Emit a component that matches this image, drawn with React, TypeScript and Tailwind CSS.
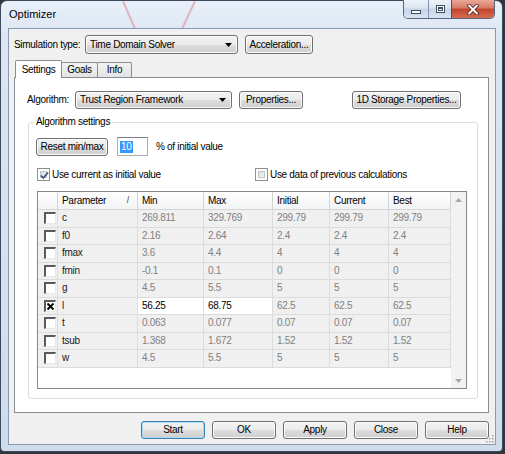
import React from "react";

const BTN_BG =
  "bg-[linear-gradient(180deg,#f2f2f2_0%,#ebebeb_50%,#dddddd_51%,#cfcfcf_100%)]";

function Btn({
  children,
  className = "",
  def = false,
}: {
  children: React.ReactNode;
  className?: string;
  def?: boolean;
}) {
  return (
    <div
      className={`flex items-center justify-center rounded-[3px] border ${
        def
          ? "border-[#3c7fb1] shadow-[inset_0_0_0_1px_#a9dcf7]"
          : "border-[#707070] shadow-[inset_0_0_0_1px_#fbfbfb]"
      } ${BTN_BG} text-[10px] leading-none tracking-[-0.3px] ${className}`}
    >
      {children}
    </div>
  );
}

function Combo({ text, className = "" }: { text: string; className?: string }) {
  return (
    <div
      className={`flex items-center rounded-[3px] border border-[#707070] shadow-[inset_0_0_0_1px_#fbfbfb] ${BTN_BG} pl-[4px] pr-[5px] text-[10px] leading-none tracking-[-0.3px] ${className}`}
    >
      <span className="flex-1">{text}</span>
      <svg width="7" height="4" viewBox="0 0 7 4">
        <path d="M0 0h7L3.5 4z" fill="#000" />
      </svg>
    </div>
  );
}

function WinCheck({ checked }: { checked: boolean }) {
  return (
    <div className="w-[13px] h-[13px] border border-[#8e8f8f] bg-white p-[2px]">
      <div className="w-full h-full bg-[linear-gradient(135deg,#d8dce2,#f6f8fa)] border border-[#c2c6cc] relative">
        {checked && (
          <svg
            width="11"
            height="11"
            viewBox="0 0 11 11"
            className="absolute left-[-2px] top-[-2px]"
          >
            <path
              d="M2 5.5 L4.3 8 L9 2.5"
              fill="none"
              stroke="#3d4f7a"
              strokeWidth="1.8"
            />
          </svg>
        )}
      </div>
    </div>
  );
}

function ClassicCheck({ checked }: { checked: boolean }) {
  return (
    <div className="w-[12px] h-[12px] bg-white border-t-[2px] border-l-[2px] border-r border-b border-t-[#5a5a5a] border-l-[#5a5a5a] border-r-[#e8e8e8] border-b-[#e8e8e8] relative">
      {checked && (
        <svg width="9" height="9" viewBox="0 0 9 9" className="absolute left-0 top-0">
          <path d="M1.5 1.5 L7.5 7.5 M7.5 1.5 L1.5 7.5" stroke="#000" strokeWidth="1.8" />
          <rect x="3" y="3" width="3" height="3" fill="#000" />
        </svg>
      )}
    </div>
  );
}

const rows: [string, string, string, string, string, string, boolean][] = [
  ["c", "269.811", "329.769", "299.79", "299.79", "299.79", false],
  ["f0", "2.16", "2.64", "2.4", "2.4", "2.4", false],
  ["fmax", "3.6", "4.4", "4", "4", "4", false],
  ["fmin", "-0.1", "0.1", "0", "0", "0", false],
  ["g", "4.5", "5.5", "5", "5", "5", false],
  ["l", "56.25", "68.75", "62.5", "62.5", "62.5", true],
  ["t", "0.063", "0.077", "0.07", "0.07", "0.07", false],
  ["tsub", "1.368", "1.672", "1.52", "1.52", "1.52", false],
  ["w", "4.5", "5.5", "5", "5", "5", false],
];

const HEAD =
  "border-r border-b border-[#d5d5d5] bg-[linear-gradient(180deg,#ffffff,#f2f3f5)] flex items-center pl-[4px] text-[10px] tracking-[-0.3px] leading-none";
const CELL =
  "border-r border-b border-[#dcdcdc] flex items-center pl-[4px] text-[10px] tracking-[-0.3px] leading-none";

export default function App() {
  return (
    <div className="w-[505px] h-[454px] bg-[#30343b] overflow-hidden font-['Liberation_Sans',Arial,sans-serif] text-black">
      <div className="w-[503px] h-[452px] rounded-t-[7px] rounded-b-[4px] border border-[#3d4a5c] bg-[linear-gradient(180deg,#e8eff8_0%,#dce6f2_8%,#cfdcec_100%)] flex flex-col relative">
        {/* desktop showing through glass */}
        <svg
          className="absolute left-0 top-0 pointer-events-none"
          width="503"
          height="28"
          viewBox="0 0 503 28"
        >
          <path d="M122 0 L134 28" stroke="#d88a93" strokeWidth="2" opacity="0.55" />
          <path d="M194 0 L181 28" stroke="#d88a93" strokeWidth="2" opacity="0.55" />
        </svg>

        {/* title bar */}
        <div className="h-[27px] flex items-start relative">
          <span className="ml-[8px] mt-[7px] text-[11px] leading-[13px] text-black">
            Optimizer
          </span>
          <div className="ml-auto mr-[7px] mt-[-1px] flex h-[19px] border border-t-0 border-[#56677f] rounded-b-[5px] overflow-hidden">
            <div className="w-[25px] border-r border-[#8496ad] bg-[linear-gradient(180deg,#eef3f9,#d9e3ef_45%,#c5d4e6_50%,#d8e4f1)] flex items-end justify-center pb-[4px]">
              <div className="w-[10px] h-[4px] bg-white border border-[#3e4c60]" />
            </div>
            <div className="w-[23px] border-r border-[#8b3a2c] bg-[linear-gradient(180deg,#eef3f9,#d9e3ef_45%,#c5d4e6_50%,#d8e4f1)] flex items-center justify-center">
              <div className="w-[9px] h-[8px] bg-white border border-[#3e4c60] p-[1px]">
                <div className="w-full h-full border border-[#3e4c60] border-t-2" />
              </div>
            </div>
            <div className="w-[42px] bg-[linear-gradient(180deg,#eaa898,#d57862_45%,#c2432b_50%,#d46c52)] flex items-center justify-center">
              <svg width="12" height="11" viewBox="0 0 12 11">
                <path
                  d="M2 1.5 L10 9.5 M10 1.5 L2 9.5"
                  stroke="#4a1f18"
                  strokeWidth="3.6"
                  strokeLinecap="round"
                />
                <path
                  d="M2 1.5 L10 9.5 M10 1.5 L2 9.5"
                  stroke="#fff"
                  strokeWidth="2"
                  strokeLinecap="round"
                />
              </svg>
            </div>
          </div>
        </div>

        {/* client area */}
        <div className="ml-[7px] w-[488px] h-[417px] border border-[#8a9bb1] bg-[#f0f0f0] flex flex-col relative">
          {/* simulation type row */}
          <div className="mt-[6px] ml-[5px] flex items-center h-[19px]">
            <span className="w-[71px] text-[10px] tracking-[-0.3px] leading-none">
              Simulation type:
            </span>
            <Combo text="Time Domain Solver" className="w-[153px] h-[19px]" />
            <Btn className="ml-[7px] w-[68px] h-[19px]">Acceleration...</Btn>
          </div>

          {/* tabs */}
          <div className="mt-[6px] ml-[6px] h-[17px] flex items-end relative z-10">
            <div className="w-[47px] h-[18px] mb-[-1px] bg-white border border-b-0 border-[#898c95] rounded-t-[2px] flex items-center justify-center text-[10px] tracking-[-0.3px] leading-none">
              Settings
            </div>
            <div className="ml-[-1px] w-[37px] h-[15px] bg-[linear-gradient(180deg,#f3f3f3,#e3e3e3)] border border-b-0 border-[#898c95] rounded-t-[2px] flex items-center justify-center text-[10px] tracking-[-0.3px] leading-none">
              Goals
            </div>
            <div className="ml-[-1px] w-[35px] h-[15px] bg-[linear-gradient(180deg,#f3f3f3,#e3e3e3)] border border-b-0 border-[#898c95] rounded-t-[2px] flex items-center justify-center text-[10px] tracking-[-0.3px] leading-none">
              Info
            </div>
          </div>

          {/* tab panel */}
          <div className="ml-[5px] w-[475px] h-[336px] border border-[#898c95] bg-white flex flex-col">
            {/* algorithm row */}
            <div className="mt-[13px] ml-[12px] flex items-center h-[18px]">
              <span className="w-[48px] text-[10px] tracking-[-0.3px] leading-none">
                Algorithm:
              </span>
              <Combo text="Trust Region Framework" className="w-[157px] h-[18px]" />
              <Btn className="ml-[7px] w-[64px] h-[18px]">Properties...</Btn>
              <Btn className="ml-[49px] w-[109px] h-[18px]">1D Storage Properties...</Btn>
            </div>

            {/* group box */}
            <div className="mt-[13px] ml-[13px] w-[450px] h-[277px] border border-[#d5dfe5] rounded-[3px] relative flex flex-col">
              <span className="absolute left-[5px] top-[-7px] bg-white px-[2px] text-[10px] tracking-[-0.3px] leading-[12px]">
                Algorithm settings
              </span>

              {/* reset row */}
              <div className="mt-[14px] ml-[7px] flex items-center h-[19px]">
                <Btn className="w-[72px] h-[18px]">Reset min/max</Btn>
                <div className="ml-[9px] w-[31px] h-[19px] bg-white border border-[#abadb3] border-t-[#7a7e86] flex items-center pl-[2px]">
                  <span className="bg-[#3399ff] text-white text-[10px] leading-[12px] tracking-[-0.3px] px-[1px]">
                    10
                  </span>
                </div>
                <span className="ml-[8px] text-[10px] tracking-[-0.3px] leading-none">
                  % of initial value
                </span>
              </div>

              {/* checkboxes */}
              <div className="mt-[12px] ml-[8px] flex items-center h-[13px]">
                <div className="w-[218px] flex items-center">
                  <WinCheck checked />
                  <span className="ml-[2px] text-[10px] tracking-[-0.3px] leading-none">
                    Use current as initial value
                  </span>
                </div>
                <div className="flex items-center">
                  <WinCheck checked={false} />
                  <span className="ml-[2px] text-[10px] tracking-[-0.3px] leading-none">
                    Use data of previous calculations
                  </span>
                </div>
              </div>

              {/* table */}
              <div className="mt-[10px] ml-[8px] w-[430px] h-[198px] border border-[#828790] bg-white flex">
                <div className="w-[413px] flex flex-col">
                  <div className="grid grid-cols-[20px_80px_66px_69px_57px_59px_62px] h-[18px]">
                    <div className={HEAD} />
                    <div className={`${HEAD} pr-[8px] justify-between`}>
                      <span>Parameter</span>
                      <span className="text-[9px] text-[#444]">/</span>
                    </div>
                    <div className={HEAD}>Min</div>
                    <div className={HEAD}>Max</div>
                    <div className={HEAD}>Initial</div>
                    <div className={HEAD}>Current</div>
                    <div className={HEAD}>Best</div>
                  </div>
                  {rows.map((r) => (
                    <div
                      key={r[0]}
                      className="grid grid-cols-[20px_80px_66px_69px_57px_59px_62px] h-[17.5px]"
                    >
                      <div className={`${CELL} bg-[#f0f0f0] justify-center pl-0`}>
                        <ClassicCheck checked={r[6]} />
                      </div>
                      <div className={`${CELL} bg-[#f0f0f0] text-[#1a1a1a]`}>{r[0]}</div>
                      <div
                        className={`${CELL} ${
                          r[6] ? "bg-white text-black" : "bg-[#f0f0f0] text-[#808080]"
                        }`}
                      >
                        {r[1]}
                      </div>
                      <div
                        className={`${CELL} ${
                          r[6] ? "bg-white text-black" : "bg-[#f0f0f0] text-[#808080]"
                        }`}
                      >
                        {r[2]}
                      </div>
                      <div className={`${CELL} bg-[#f0f0f0] text-[#808080]`}>{r[3]}</div>
                      <div className={`${CELL} bg-[#f0f0f0] text-[#808080]`}>{r[4]}</div>
                      <div className={`${CELL} bg-[#f0f0f0] text-[#808080]`}>{r[5]}</div>
                    </div>
                  ))}
                </div>
                <div className="w-[15px] bg-[#f2f2f2] flex flex-col items-center justify-between pt-[6px] pb-[5px]">
                  <svg width="7" height="4" viewBox="0 0 7 4">
                    <path d="M0 4h7L3.5 0z" fill="#a8a8a8" />
                  </svg>
                  <svg width="7" height="4" viewBox="0 0 7 4">
                    <path d="M0 0h7L3.5 4z" fill="#a8a8a8" />
                  </svg>
                </div>
              </div>
            </div>
          </div>

          {/* bottom buttons */}
          <div className="mt-[8px] flex justify-end gap-[7px] pr-[6px]">
            <Btn def className="w-[64px] h-[18px]">Start</Btn>
            <Btn className="w-[64px] h-[18px]">OK</Btn>
            <Btn className="w-[64px] h-[18px]">Apply</Btn>
            <Btn className="w-[64px] h-[18px]">Close</Btn>
            <Btn className="w-[64px] h-[18px]">Help</Btn>
          </div>

          {/* resize grip */}
          <svg
            className="absolute right-[1px] bottom-[1px]"
            width="10"
            height="10"
            viewBox="0 0 10 10"
          >
            {[
              [8, 2],
              [8, 5],
              [5, 5],
              [8, 8],
              [5, 8],
              [2, 8],
            ].map(([x, y], i) => (
              <rect key={i} x={x} y={y} width="1.5" height="1.5" fill="#9aa4b0" />
            ))}
          </svg>
        </div>
      </div>
    </div>
  );
}
